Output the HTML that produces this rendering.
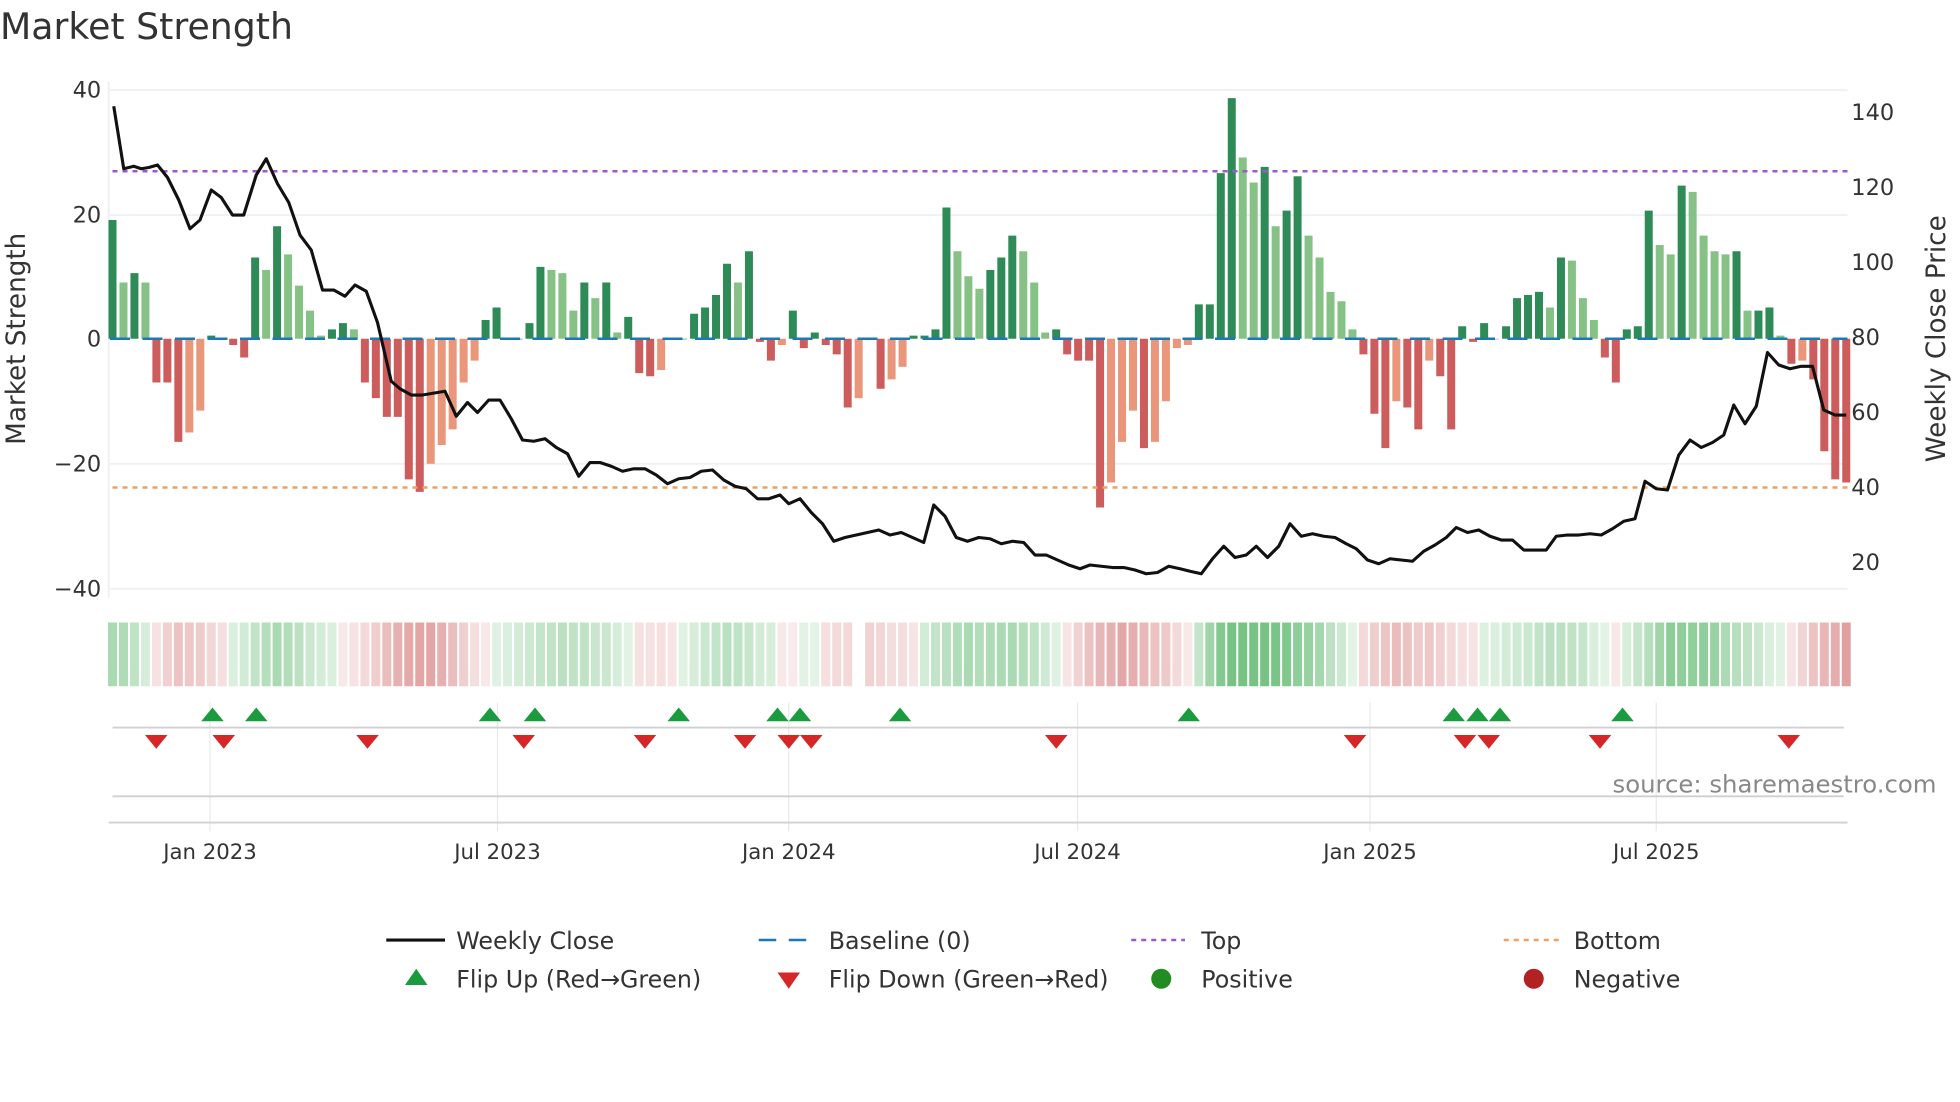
<!DOCTYPE html>
<html><head><meta charset="utf-8"><style>
html,body{margin:0;padding:0;background:#fff;width:1960px;height:1102px;overflow:hidden}
svg{display:block;font-family:"DejaVu Sans","Liberation Sans",sans-serif}
</style></head><body>
<svg id="s" width="1960" height="1102" viewBox="0 0 1568 881.6" xmlns="http://www.w3.org/2000/svg">
<rect width="1568" height="882" fill="#fff"/>
<text x="0" y="31" font-size="29" fill="#333">Market Strength</text>
<g stroke="#eef0f3" stroke-width="1.5">
<line x1="88" x2="1478" y1="72" y2="72"/><line x1="88" x2="1478" y1="172" y2="172"/>
<line x1="88" x2="1478" y1="371" y2="371"/><line x1="88" x2="1478" y1="471" y2="471"/>
<line x1="87" x2="87" y1="65" y2="478"/>
</g>
<g font-size="18" fill="#333" text-anchor="end">
<text x="81" y="78">40</text><text x="81" y="178">20</text><text x="81" y="277">0</text>
<text x="81" y="377">−20</text><text x="81" y="477">−40</text>
</g>
<g font-size="18" fill="#333">
<text x="1481" y="96">140</text><text x="1481" y="156">120</text><text x="1481" y="216">100</text>
<text x="1481" y="276">80</text><text x="1481" y="336">60</text><text x="1481" y="396">40</text><text x="1481" y="456">20</text>
</g>
<text transform="translate(20,271) rotate(-90)" font-size="21" fill="#333" text-anchor="middle">Market Strength</text>
<text transform="translate(1556,271) rotate(-90)" font-size="21" fill="#333" text-anchor="middle">Weekly Close Price</text>
<g id="bars"></g>
<line x1="88" x2="1478" y1="271" y2="271" stroke="#1f77b4" stroke-width="2" stroke-dasharray="16,10"/>
<line x1="90" x2="1478" y1="137" y2="137" stroke="#9b59d0" stroke-width="2" stroke-dasharray="4,4"/>
<line x1="90" x2="1478" y1="390" y2="390" stroke="#f0a060" stroke-width="2" stroke-dasharray="4,4"/>
<polyline id="price" fill="none" stroke="#111" stroke-width="2.5" stroke-linejoin="round"/>
<g id="heat"></g>
<g stroke="#e6e9ee" stroke-width="1">
<line x1="168" x2="168" y1="562" y2="665"/><line x1="398" x2="398" y1="562" y2="665"/>
<line x1="631" x2="631" y1="562" y2="665"/><line x1="862" x2="862" y1="562" y2="665"/>
<line x1="1096" x2="1096" y1="562" y2="665"/><line x1="1325" x2="1325" y1="562" y2="665"/>
</g>
<line x1="90" x2="1475" y1="582" y2="582" stroke="#d0d0d0" stroke-width="1.5"/>
<line x1="90" x2="1475" y1="637" y2="637" stroke="#d0d0d0" stroke-width="1.5"/>
<line x1="87" x2="1478" y1="658" y2="658" stroke="#d0d0d0" stroke-width="1.5"/>
<g id="marks"></g>
<text x="1290" y="634" font-size="19.5" fill="#888">source: sharemaestro.com</text>
<g font-size="17" fill="#333" text-anchor="middle">
<text x="168" y="687">Jan 2023</text><text x="398" y="687">Jul 2023</text><text x="631" y="687">Jan 2024</text>
<text x="862" y="687">Jul 2024</text><text x="1096" y="687">Jan 2025</text><text x="1325" y="687">Jul 2025</text>
</g>
<g font-size="19" fill="#333">
<line x1="309" x2="356" y1="752" y2="752" stroke="#111" stroke-width="2.5"/><text x="365" y="759">Weekly Close</text>
<line x1="607" x2="652" y1="752" y2="752" stroke="#1f77b4" stroke-width="2" stroke-dasharray="14,10"/><text x="663" y="759">Baseline (0)</text>
<line x1="905" x2="948" y1="752" y2="752" stroke="#9b59d0" stroke-width="2" stroke-dasharray="4,4"/><text x="961" y="759">Top</text>
<line x1="1203" x2="1247" y1="752" y2="752" stroke="#f0a060" stroke-width="2" stroke-dasharray="4,4"/><text x="1259" y="759">Bottom</text>
<polygon points="324,788 342,788 333,775" fill="#1a9c3e"/><text x="365" y="790">Flip Up (Red→Green)</text>
<polygon points="622,778 640,778 631,791" fill="#d62728"/><text x="663" y="790">Flip Down (Green→Red)</text>
<circle cx="929" cy="783" r="8" fill="#228b22"/><text x="961" y="790">Positive</text>
<circle cx="1227" cy="783" r="8" fill="#b22222"/><text x="1259" y="790">Negative</text>
</g>
</svg>
<script>
var NS="http://www.w3.org/2000/svg";
function el(p,t,a){var e=document.createElementNS(NS,t);for(var k in a)e.setAttribute(k,a[k]);p.appendChild(e);return e;}
var v=[19,9,10.5,9,-7,-7,-16.5,-15,-11.5,0.5,0,-1,-3,13,11,18,13.5,8.5,4.5,0.5,1.5,2.5,1.5,-7,-9.5,-12.5,-12.5,-22.5,-24.5,-20,-17,-14.5,-7,-3.5,3,5,0,0,2.5,11.5,11,10.5,4.5,9,6.5,9,1,3.5,-5.5,-6,-5,0,0,4,5,7,12,9,14,-0.5,-3.5,-1,4.5,-1.5,1,-1,-2.5,-11,-9.5,0,-8,-6.5,-4.5,0.5,0.5,1.5,21,14,10,8,11,13,16.5,14,9,1,1.5,-2.5,-3.5,-3.5,-27,-23,-16.5,-11.5,-17.5,-16.5,-10,-1.5,-1,5.5,5.5,26.5,38.5,29,25,27.5,18,20.5,26,16.5,13,7.5,6,1.5,-2.5,-12,-17.5,-10,-11,-14.5,-3.5,-6,-14.5,2,-0.5,2.5,0,2,6.5,7,7.5,5,13,12.5,6.5,3,-3,-7,1.5,2,20.5,15,13.5,24.5,23.5,16.5,14,13.5,14,4.5,4.5,5,0.5,-4,-3.5,-6.5,-18,-22.5,-23];
var bars=document.getElementById("bars"),heat=document.getElementById("heat");
var n=v.length,step=(1477-90)/(n-1);
for(var i=0;i<n;i++){var x=90+i*step,y=v[i],pv=i?v[i-1]:0;
 var dark=Math.abs(y)>=Math.abs(pv)||(y*pv<0);
 var c=y>=0?(dark?"#2e8b57":"#86c286"):(dark?"#cd5c5c":"#e9967a");
 var h=Math.abs(y)*5;
 el(bars,"rect",{x:x-3.2,y:y>=0?271-h:271,width:6.4,height:Math.max(h,0.5),fill:c});
 var s=0,cnt=0;for(var j=Math.max(0,i-2);j<=Math.min(n-1,i+2);j++){s+=v[j];cnt++;}s/=cnt;
 var a=Math.min(1,0.2+Math.abs(s)/30);
 var hc=s>=0?"rgba(60,170,80,"+(a*0.7)+")":"rgba(200,80,80,"+(a*0.6)+")";
 if(!(x>681&&x<690))el(heat,"rect",{x:x-3.6,y:498,width:7.2,height:51,fill:hc});
}
var p=[[91,85],[99,135],[107,133],[113,135],[119,134],[126,132],[134,142],[143,160],[152,183],[160,176],[169,152],[177,158],[186,172],[195,172],[205,140],[213,127],[222,147],[231,162],[240,188],[249,200],[258,232],[267,232],[276,237],[284,228],[293,233],[302,258],[313,305],[320,311],[329,316],[338,316],[356,313],[365,333],[374,322],[382,330],[391,320],[400,320],[409,335],[418,352],[427,353],[436,351],[445,358],[454,363],[463,381],[472,370],[480,370],[489,373],[498,377],[507,375],[516,375],[525,380],[534,387],[543,383],[552,382],[561,377],[570,376],[579,384],[588,389],[597,391],[606,399],[615,399],[624,396],[631,403],[640,399],[649,410],[658,419],[667,433],[676,430],[685,428],[694,426],[703,424],[712,428],[721,426],[730,430],[739,434],[747,404],[756,413],[765,430],[774,433],[783,430],[792,431],[801,435],[810,433],[819,434],[828,444],[837,444],[846,448],[855,452],[864,455],[872,452],[881,453],[890,454],[899,454],[908,456],[917,459],[926,458],[935,453],[944,455],[952,457],[961,459],[970,447],[979,437],[988,446],[997,444],[1005,437],[1014,446],[1023,437],[1032,419],[1041,429],[1050,427],[1059,429],[1068,430],[1077,435],[1085,439],[1094,448],[1103,451],[1112,447],[1121,448],[1130,449],[1139,441],[1148,436],[1157,430],[1165,422],[1174,426],[1183,424],[1192,429],[1201,432],[1210,432],[1219,440],[1228,440],[1237,440],[1245,429],[1254,428],[1263,428],[1272,427],[1281,428],[1290,423],[1299,417],[1308,415],[1316,385],[1325,391],[1334,392],[1343,364],[1352,352],[1361,358],[1370,354],[1379,348],[1387,324],[1396,339],[1405,325],[1414,282],[1423,292],[1432,295],[1441,293],[1450,293],[1459,328],[1468,332],[1477,332]];
document.getElementById("price").setAttribute("points",p.map(function(q){return q.join(",")}).join(" "));
var m=document.getElementById("marks");
[170,205,392,428,543,622,640,720,951,1163,1182,1200,1298].forEach(function(x){el(m,"polygon",{points:(x-9)+",577 "+(x+9)+",577 "+x+",566",fill:"#1a9c3e"});});
[125,179,294,419,516,596,631,649,845,1084,1172,1191,1280,1431].forEach(function(x){el(m,"polygon",{points:(x-9)+",588 "+(x+9)+",588 "+x+",599",fill:"#d62728"});});
</script>
</body></html>
